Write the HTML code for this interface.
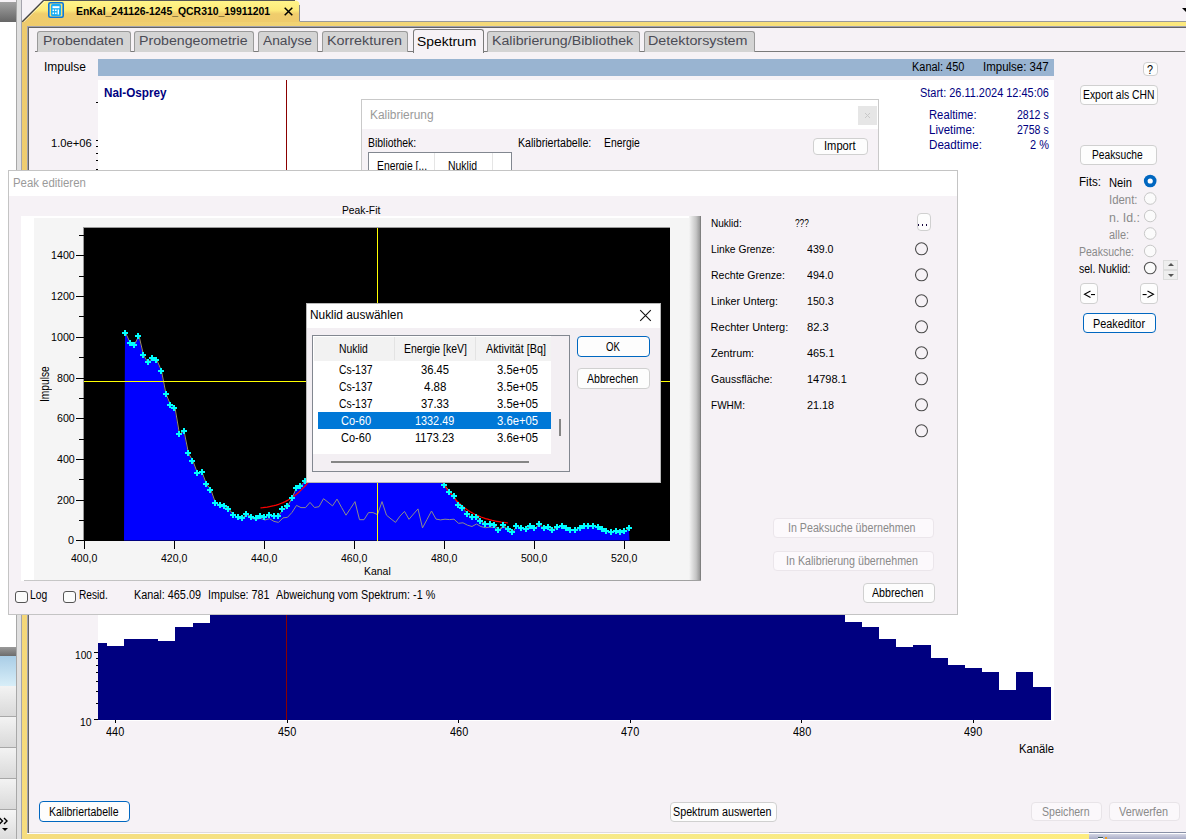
<!DOCTYPE html><html><head><meta charset="utf-8"><style>
html,body{margin:0;padding:0;}
body{width:1186px;height:839px;overflow:hidden;position:relative;background:#f6f2f6;font-family:"Liberation Sans",sans-serif;}
div{box-sizing:border-box;}
.t{position:absolute;white-space:nowrap;line-height:normal;}
.btn{position:absolute;background:#fdfdfd;border:1px solid #d0d0d0;border-radius:4px;}
</style></head><body>
<div style="position:absolute;left:0px;top:2px;width:17px;height:20px;background:linear-gradient(#a2a2a2,#666)"></div>
<div style="position:absolute;left:0px;top:22px;width:17px;height:626px;background:#fff"></div>
<div style="position:absolute;left:16px;top:0px;width:6px;height:839px;background:#e0e0e0;border-left:1px solid #a8a8a8"></div>
<div style="position:absolute;left:21px;top:0px;width:1px;height:839px;background:#a4a4ac"></div>
<div style="position:absolute;left:0px;top:647px;width:16px;height:9px;background:linear-gradient(#9a9a9a,#6d6d6d)"></div>
<div style="position:absolute;left:0px;top:656px;width:16px;height:30px;background:linear-gradient(#a9cde6,#d8eef8)"></div>
<div style="position:absolute;left:0px;top:686px;width:16px;height:31px;background:linear-gradient(#f3f3f3,#d9d9d9);border-bottom:1px solid #a8a8a8"></div>
<div style="position:absolute;left:0px;top:717px;width:16px;height:31px;background:linear-gradient(#f3f3f3,#d9d9d9);border-bottom:1px solid #a8a8a8"></div>
<div style="position:absolute;left:0px;top:748px;width:16px;height:31px;background:linear-gradient(#f3f3f3,#d9d9d9);border-bottom:1px solid #a8a8a8"></div>
<div style="position:absolute;left:0px;top:779px;width:16px;height:31px;background:linear-gradient(#f3f3f3,#d9d9d9);border-bottom:1px solid #a8a8a8"></div>
<div style="position:absolute;left:0px;top:810px;width:16px;height:29px;background:linear-gradient(#f6f6f6,#dcdcdc)"></div>
<svg style="position:absolute;left:0;top:817px" width="10" height="8"><path d="M-0.5,1L2.5,4L-0.5,7M4,1L7,4L4,7" stroke="#000" stroke-width="1.4" fill="none"/></svg>
<div style="position:absolute;left:1.5px;top:827.5px;width:0;height:0;border-left:3px solid transparent;border-right:3px solid transparent;border-top:3.5px solid #000"></div>
<div style="position:absolute;left:22px;top:21px;width:1164px;height:818px;background:linear-gradient(90deg,#efcb6c 0%,#f4d979 40%,#fce97e 100%)"></div>
<div style="position:absolute;left:44px;top:21px;width:1142px;height:1px;background:#9a9a9a"></div>
<div style="position:absolute;left:27px;top:26px;width:1159px;height:1px;background:#a2a2ae"></div>
<div style="position:absolute;left:27px;top:26px;width:1px;height:807px;background:#a2a2ae"></div>
<div style="position:absolute;left:28px;top:27px;width:1158px;height:1px;background:#646464"></div>
<div style="position:absolute;left:28px;top:27px;width:1px;height:806px;background:#646464"></div>
<div style="position:absolute;left:29px;top:28px;width:1157px;height:805px;background:#f6f2f6"></div>
<div style="position:absolute;left:22px;top:21px;width:5px;height:813px;background:linear-gradient(#edca6d,#f2d274 50%,#f7dd7e)"></div>
<div style="position:absolute;left:29px;top:832px;width:1157px;height:1px;background:#dedade"></div>
<div style="position:absolute;left:27px;top:833px;width:1159px;height:1px;background:#fdfdfd"></div>
<div style="position:absolute;left:22px;top:834px;width:1067px;height:5px;background:linear-gradient(90deg,#f5dc7e,#f5e98a 45%,#fdec80)"></div>
<div style="position:absolute;left:1089px;top:832px;width:97px;height:1px;background:#8890a6"></div>
<div style="position:absolute;left:1089px;top:833px;width:97px;height:1px;background:#fdfdff"></div>
<div style="position:absolute;left:1089px;top:834px;width:97px;height:5px;background:linear-gradient(#d4d6e4,#a8abc6)"></div>
<div style="position:absolute;left:1098px;top:837px;width:5px;height:2px;background:#fff;border-top:1px solid #3c5a5a"></div>
<div style="position:absolute;left:1105px;top:837px;width:2px;height:2px;background:#f0a020"></div>
<svg style="position:absolute;left:0;top:0" width="320" height="30">
<defs><linearGradient id="tg" x1="0" y1="0" x2="0" y2="1"><stop offset="0" stop-color="#fff58a"/><stop offset="0.45" stop-color="#fdea7a"/><stop offset="0.62" stop-color="#f0cd6c"/><stop offset="1" stop-color="#efcb6c"/></linearGradient></defs>
<path d="M22,22 L43.5,0.5 L295,0.5 Q299.5,0.5 299.5,5 L299.5,22 Z" fill="url(#tg)"/>
<path d="M23.6,22 L45,0.6" stroke="#fff" stroke-width="0.9" fill="none" opacity="0.8"/><path d="M22.3,21.8 L44,0" stroke="#444" stroke-width="1.3" fill="none"/>
<path d="M43,0.5 L295,0.5" stroke="#555" stroke-width="1" fill="none"/>
<path d="M299.5,5 L299.5,21" stroke="#888" stroke-width="1" fill="none"/>
</svg>
<svg style="position:absolute;left:48px;top:2px" width="16" height="16">
<rect x="0.8" y="0.8" width="14.4" height="14.4" rx="1.5" fill="#f3e27a" stroke="#0a77dc" stroke-width="1.6"/>
<rect x="3" y="3.6" width="10" height="12" rx="1.6" fill="#17aef5" transform="translate(0,-1.6)"/>
<rect x="4.5" y="4.2" width="7" height="2" fill="#fff"/>
<rect x="4.5" y="7.5" width="1.6" height="1.6" fill="#fff"/><rect x="7" y="7.5" width="1.6" height="1.6" fill="#fff"/>
<rect x="4.5" y="10.5" width="1.6" height="1.6" fill="#fff"/><rect x="7" y="10.5" width="1.6" height="1.6" fill="#fff"/>
<rect x="9.6" y="7.5" width="1.4" height="5" fill="#fff"/>
</svg>
<div class="t" style="left:75.90px;top:5px;font-size:11px;color:#000;font-weight:bold;transform:scaleX(0.9474);transform-origin:0 0;">EnKal_241126-1245_QCR310_19911201</div>
<svg style="position:absolute;left:284px;top:7px" width="9" height="9"><path d="M0.7,0.7 L8.3,8.3 M8.3,0.7 L0.7,8.3" stroke="#000" stroke-width="1.5"/></svg>
<div style="position:absolute;left:1182px;top:8px;width:0;height:0;border-left:4px solid transparent;border-right:4px solid transparent;border-top:4px solid #000"></div>
<div style="position:absolute;left:35px;top:51px;width:1150px;height:1px;background:#7a7a7a"></div>
<div style="position:absolute;left:37px;top:31px;width:94px;height:21px;background:#d4d4d4;border:1px solid #9a9a9a;border-bottom:none;border-radius:3px 3px 0 0"></div>
<div class="t" style="left:42.70px;top:34px;font-size:12.5px;color:#4b4b55;transform:scaleX(1.1260);transform-origin:0 0;">Probendaten</div>
<div style="position:absolute;left:134px;top:31px;width:120px;height:21px;background:#d4d4d4;border:1px solid #9a9a9a;border-bottom:none;border-radius:3px 3px 0 0"></div>
<div class="t" style="left:138.90px;top:34px;font-size:12.5px;color:#4b4b55;transform:scaleX(1.1326);transform-origin:0 0;">Probengeometrie</div>
<div style="position:absolute;left:258px;top:31px;width:60px;height:21px;background:#d4d4d4;border:1px solid #9a9a9a;border-bottom:none;border-radius:3px 3px 0 0"></div>
<div class="t" style="left:262.70px;top:34px;font-size:12.5px;color:#4b4b55;transform:scaleX(1.0996);transform-origin:0 0;">Analyse</div>
<div style="position:absolute;left:322px;top:31px;width:86px;height:21px;background:#d4d4d4;border:1px solid #9a9a9a;border-bottom:none;border-radius:3px 3px 0 0"></div>
<div class="t" style="left:326.80px;top:34px;font-size:12.5px;color:#4b4b55;transform:scaleX(1.1470);transform-origin:0 0;">Korrekturen</div>
<div style="position:absolute;left:412.5px;top:29px;width:71.0px;height:24px;background:#f6f2f6;border:1px solid #7a7a7a;border-bottom:none;border-radius:3px 3px 0 0"></div>
<div class="t" style="left:417.30px;top:35px;font-size:12.5px;color:#000;transform:scaleX(1.1105);transform-origin:0 0;">Spektrum</div>
<div style="position:absolute;left:487px;top:31px;width:153px;height:21px;background:#d4d4d4;border:1px solid #9a9a9a;border-bottom:none;border-radius:3px 3px 0 0"></div>
<div class="t" style="left:491.80px;top:34px;font-size:12.5px;color:#4b4b55;transform:scaleX(1.1353);transform-origin:0 0;">Kalibrierung/Bibliothek</div>
<div style="position:absolute;left:643.5px;top:31px;width:111.0px;height:21px;background:#d4d4d4;border:1px solid #9a9a9a;border-bottom:none;border-radius:3px 3px 0 0"></div>
<div class="t" style="left:648.20px;top:34px;font-size:12.5px;color:#4b4b55;transform:scaleX(1.1460);transform-origin:0 0;">Detektorsystem</div>
<div class="t" style="left:44.40px;top:60px;font-size:12px;color:#000;transform:scaleX(0.9949);transform-origin:0 0;">Impulse</div>
<div style="position:absolute;left:98px;top:59px;width:956px;height:17px;background:#99b4d1"></div>
<div class="t" style="left:983.40px;top:60px;font-size:12px;color:#000;transform:scaleX(0.9563);transform-origin:0 0;">Impulse: 347</div>
<div class="t" style="left:912.40px;top:60px;font-size:12px;color:#000;transform:scaleX(0.9133);transform-origin:0 0;">Kanal: 450</div>
<div style="position:absolute;left:98px;top:80px;width:956px;height:641px;background:#fff"></div>
<svg style="position:absolute;left:0;top:0" width="1186" height="839"><path d="M98.00,643H106.82V720H98.00ZM106.82,646H123.98V720H106.82ZM123.98,639H141.14V720H123.98ZM141.14,639H158.30V720H141.14ZM158.30,641H175.46V720H158.30ZM175.46,627H192.62V720H175.46ZM192.62,623H209.78V720H192.62ZM209.78,400H226.94V720H209.78ZM226.94,400H244.10V720H226.94ZM244.10,400H261.26V720H244.10ZM261.26,400H278.42V720H261.26ZM278.42,400H295.58V720H278.42ZM295.58,400H312.74V720H295.58ZM312.74,400H329.90V720H312.74ZM329.90,400H347.06V720H329.90ZM347.06,400H364.22V720H347.06ZM364.22,400H381.38V720H364.22ZM381.38,400H398.54V720H381.38ZM398.54,400H415.70V720H398.54ZM415.70,400H432.86V720H415.70ZM432.86,400H450.02V720H432.86ZM450.02,400H467.18V720H450.02ZM467.18,400H484.34V720H467.18ZM484.34,400H501.50V720H484.34ZM501.50,400H518.66V720H501.50ZM518.66,400H535.82V720H518.66ZM535.82,400H552.98V720H535.82ZM552.98,400H570.14V720H552.98ZM570.14,400H587.30V720H570.14ZM587.30,400H604.46V720H587.30ZM604.46,400H621.62V720H604.46ZM621.62,400H638.78V720H621.62ZM638.78,400H655.94V720H638.78ZM655.94,400H673.10V720H655.94ZM673.10,400H690.26V720H673.10ZM690.26,400H707.42V720H690.26ZM707.42,400H724.58V720H707.42ZM724.58,400H741.74V720H724.58ZM741.74,400H758.90V720H741.74ZM758.90,400H776.06V720H758.90ZM776.06,400H793.22V720H776.06ZM793.22,400H810.38V720H793.22ZM810.38,400H827.54V720H810.38ZM827.54,400H844.70V720H827.54ZM844.70,622H861.86V720H844.70ZM861.86,627H879.02V720H861.86ZM879.02,639H896.18V720H879.02ZM896.18,647H913.34V720H896.18ZM913.34,645H930.50V720H913.34ZM930.50,658H947.66V720H930.50ZM947.66,665H964.82V720H947.66ZM964.82,668H981.98V720H964.82ZM981.98,672H999.14V720H981.98ZM999.14,690H1016.30V720H999.14ZM1016.30,672H1033.46V720H1016.30ZM1033.46,687H1050.62V720H1033.46Z" fill="#000080" shape-rendering="crispEdges"/><rect x="286" y="80" width="1" height="640" fill="#8b0000"/><path d="M96,102.5H98M96,140.5H98M96,146.5H98M96,153.5H98M96,160.5H98M96,169.5H98M94,652.5H98M94,719.5H98M96,658.5H98M96,665.5H98M96,672.5H98M96,681.5H98M96,691.5H98M96,703.5H98M115.4,720V723M287.0,720V723M458.6,720V723M630.2,720V723M801.8,720V723M973.4,720V723" stroke="#000" stroke-width="1" fill="none" shape-rendering="crispEdges"/></svg>
<div class="t" style="left:103.70px;top:86px;font-size:12px;color:#000080;font-weight:bold;transform:scaleX(0.9762);transform-origin:0 0;">NaI-Osprey</div>
<div class="t" style="left:51.30px;top:137px;font-size:11px;color:#000;transform:scaleX(1.0183);transform-origin:0 0;">1.0e+06</div>
<div class="t" style="left:74.70px;top:649px;font-size:11px;color:#000;transform:scaleX(0.9264);transform-origin:0 0;">100</div>
<div class="t" style="left:80.20px;top:716px;font-size:11px;color:#000;transform:scaleX(0.9400);transform-origin:0 0;">10</div>
<div class="t" style="left:106.30px;top:725px;font-size:12px;color:#000;transform:scaleX(0.9091);transform-origin:0 0;">440</div>
<div class="t" style="left:277.90px;top:725px;font-size:12px;color:#000;transform:scaleX(0.9091);transform-origin:0 0;">450</div>
<div class="t" style="left:449.50px;top:725px;font-size:12px;color:#000;transform:scaleX(0.9091);transform-origin:0 0;">460</div>
<div class="t" style="left:621.10px;top:725px;font-size:12px;color:#000;transform:scaleX(0.9091);transform-origin:0 0;">470</div>
<div class="t" style="left:792.70px;top:725px;font-size:12px;color:#000;transform:scaleX(0.9091);transform-origin:0 0;">480</div>
<div class="t" style="left:964.30px;top:725px;font-size:12px;color:#000;transform:scaleX(0.9091);transform-origin:0 0;">490</div>
<div class="t" style="left:1019.00px;top:742px;font-size:12px;color:#000;transform:scaleX(0.9368);transform-origin:0 0;">Kanäle</div>
<div class="t" style="left:920.20px;top:86px;font-size:12px;color:#000080;transform:scaleX(0.9128);transform-origin:0 0;">Start: 26.11.2024 12:45:06</div>
<div class="t" style="left:928.70px;top:108px;font-size:12px;color:#000080;transform:scaleX(0.9372);transform-origin:0 0;">Realtime:</div>
<div class="t" style="left:1017.40px;top:108px;font-size:12px;color:#000080;transform:scaleX(0.8799);transform-origin:0 0;">2812 s</div>
<div class="t" style="left:928.70px;top:123px;font-size:12px;color:#000080;transform:scaleX(0.9580);transform-origin:0 0;">Livetime:</div>
<div class="t" style="left:1017.40px;top:123px;font-size:12px;color:#000080;transform:scaleX(0.8799);transform-origin:0 0;">2758 s</div>
<div class="t" style="left:928.70px;top:138px;font-size:12px;color:#000080;transform:scaleX(0.9673);transform-origin:0 0;">Deadtime:</div>
<div class="t" style="left:1030.20px;top:138px;font-size:12px;color:#000080;transform:scaleX(0.9140);transform-origin:0 0;">2 %</div>
<div style="position:absolute;left:1143px;top:62px;width:15px;height:14px;background:#fdfdfd;border:1px solid #d0d0d0;border-radius:4px"></div>
<div class="t" style="left:1146.50px;top:63px;font-size:12px;color:#000;transform:scaleX(0.8991);transform-origin:0 0;">?</div>
<div style="position:absolute;left:1080px;top:85px;width:78px;height:20px;background:#fdfdfd;border:1px solid #d0d0d0;border-radius:4px"></div>
<div class="t" style="left:1082.60px;top:88px;font-size:12px;color:#000;transform:scaleX(0.8647);transform-origin:0 0;">Export als CHN</div>
<div style="position:absolute;left:1079.5px;top:145px;width:77.5px;height:20px;background:#fdfdfd;border:1px solid #d0d0d0;border-radius:4px"></div>
<div class="t" style="left:1091.50px;top:148px;font-size:12px;color:#000;transform:scaleX(0.8540);transform-origin:0 0;">Peaksuche</div>
<div class="t" style="left:1078.70px;top:175px;font-size:12px;color:#000;transform:scaleX(0.9707);transform-origin:0 0;">Fits:</div>
<div class="t" style="left:1108.50px;top:176px;font-size:12px;color:#000;transform:scaleX(0.9320);transform-origin:0 0;">Nein</div>
<div class="t" style="left:1108.50px;top:193px;font-size:12px;color:#8a8a8a;transform:scaleX(0.9493);transform-origin:0 0;">Ident:</div>
<div class="t" style="left:1108.50px;top:211px;font-size:12px;color:#8a8a8a;transform:scaleX(1.0328);transform-origin:0 0;">n. Id.:</div>
<div class="t" style="left:1108.50px;top:228px;font-size:12px;color:#8a8a8a;transform:scaleX(0.9086);transform-origin:0 0;">alle:</div>
<div class="t" style="left:1078.70px;top:245px;font-size:12px;color:#8a8a8a;transform:scaleX(0.8771);transform-origin:0 0;">Peaksuche:</div>
<div class="t" style="left:1078.70px;top:262px;font-size:12px;color:#000;transform:scaleX(0.8776);transform-origin:0 0;">sel. Nuklid:</div>
<svg style="position:absolute;left:1140px;top:170px" width="22" height="110"><circle cx="10.2" cy="11" r="6.3" fill="#0067c0"/><circle cx="10.2" cy="11" r="2.6" fill="#fff"/><circle cx="10.2" cy="28.5" r="5.8" fill="#fbfbfb" stroke="#c8c8c8" stroke-width="1"/><circle cx="10.2" cy="46" r="5.8" fill="#fbfbfb" stroke="#c8c8c8" stroke-width="1"/><circle cx="10.2" cy="63.5" r="5.8" fill="#fbfbfb" stroke="#c8c8c8" stroke-width="1"/><circle cx="10.2" cy="81" r="5.8" fill="#fbfbfb" stroke="#c8c8c8" stroke-width="1"/><circle cx="10.2" cy="98" r="5.8" fill="#fbfbfb" stroke="#555" stroke-width="1.1"/></svg>
<div style="position:absolute;left:1163px;top:260px;width:15px;height:10px;background:#eeeeee;border:1px solid #dcdcdc"></div>
<div style="position:absolute;left:1163px;top:270px;width:15px;height:10px;background:#eeeeee;border:1px solid #dcdcdc"></div>
<div style="position:absolute;left:1168px;top:263px;width:0;height:0;border-left:3px solid transparent;border-right:3px solid transparent;border-bottom:3px solid #555"></div>
<div style="position:absolute;left:1168px;top:274px;width:0;height:0;border-left:3px solid transparent;border-right:3px solid transparent;border-top:3px solid #555"></div>
<div style="position:absolute;left:1080px;top:283px;width:17.5px;height:21px;background:#fdfdfd;border:1px solid #d0d0d0;border-radius:4px"></div>
<div style="position:absolute;left:1140px;top:283px;width:18px;height:21px;background:#fdfdfd;border:1px solid #d0d0d0;border-radius:4px"></div>
<svg style="position:absolute;left:1080px;top:283px" width="80" height="21"><path d="M10.5,8L4.5,11.3L10.5,14.6" stroke="#000" stroke-width="1.1" fill="none"/><rect x="11" y="11" width="4" height="1.1" fill="#000"/><rect x="62.6" y="11" width="4" height="1.1" fill="#000"/><path d="M67.5,8L73.5,11.3L67.5,14.6" stroke="#000" stroke-width="1.1" fill="none"/></svg>
<div style="position:absolute;left:1083px;top:312.5px;width:73px;height:20.5px;background:#fdfdfd;border:1px solid #0067c0;border-radius:4px"></div>
<div class="t" style="left:1093.00px;top:317px;font-size:12px;color:#000;transform:scaleX(0.9065);transform-origin:0 0;">Peakeditor</div>
<div style="position:absolute;left:39px;top:801px;width:91px;height:21px;background:#fdfdfd;border:1px solid #0067c0;border-radius:4px"></div>
<div class="t" style="left:48.50px;top:805px;font-size:12px;color:#000;transform:scaleX(0.8756);transform-origin:0 0;">Kalibriertabelle</div>
<div style="position:absolute;left:669.5px;top:801.5px;width:107.5px;height:20.0px;background:#fdfdfd;border:1px solid #d0d0d0;border-radius:4px"></div>
<div class="t" style="left:672.50px;top:805px;font-size:12px;color:#000;transform:scaleX(0.8951);transform-origin:0 0;">Spektrum auswerten</div>
<div style="position:absolute;left:1030.5px;top:801.5px;width:71.5px;height:19.5px;background:#fbf8fb;border:1px solid #e8e4e8;border-radius:4px"></div>
<div class="t" style="left:1042.00px;top:805px;font-size:12px;color:#8a8a8a;transform:scaleX(0.8791);transform-origin:0 0;">Speichern</div>
<div style="position:absolute;left:1108.5px;top:801.5px;width:71.5px;height:19.5px;background:#fbf8fb;border:1px solid #e8e4e8;border-radius:4px"></div>
<div class="t" style="left:1119.00px;top:805px;font-size:12px;color:#8a8a8a;transform:scaleX(0.9070);transform-origin:0 0;">Verwerfen</div>
<div style="position:absolute;left:361px;top:98.5px;width:518px;height:80px;background:#f6f2f6;border:1px solid #c9c9c9;border-bottom:none"></div>
<div style="position:absolute;left:362px;top:99.5px;width:516px;height:29.5px;background:#fff"></div>
<div class="t" style="left:370.20px;top:108px;font-size:12px;color:#9a9a9a;transform:scaleX(0.9917);transform-origin:0 0;">Kalibrierung</div>
<div style="position:absolute;left:858px;top:106px;width:19px;height:19px;background:#e6e6e6"></div>
<svg style="position:absolute;left:864px;top:112px" width="7" height="7"><path d="M1,1L6,6M6,1L1,6" stroke="#c8c8c8" stroke-width="1"/></svg>
<div class="t" style="left:367.70px;top:136px;font-size:12px;color:#000;transform:scaleX(0.8688);transform-origin:0 0;">Bibliothek:</div>
<div class="t" style="left:517.50px;top:136px;font-size:12px;color:#000;transform:scaleX(0.8863);transform-origin:0 0;">Kalibriertabelle:</div>
<div class="t" style="left:604.40px;top:136px;font-size:12px;color:#000;transform:scaleX(0.8632);transform-origin:0 0;">Energie</div>
<div style="position:absolute;left:813px;top:137.5px;width:55px;height:17.5px;background:#fdfdfd;border:1px solid #d0d0d0;border-radius:4px"></div>
<div class="t" style="left:824.00px;top:139px;font-size:12px;color:#000;transform:scaleX(0.9293);transform-origin:0 0;">Import</div>
<div style="position:absolute;left:368px;top:151.5px;width:144px;height:30px;background:#fff;border:1px solid #828790"></div>
<div style="position:absolute;left:369px;top:152.5px;width:65px;height:20px;background:#fff"></div>
<div style="position:absolute;left:434px;top:153px;width:1px;height:18px;background:#e5e5e5"></div>
<div style="position:absolute;left:491.5px;top:153px;width:1px;height:18px;background:#e5e5e5"></div>
<div class="t" style="left:377.30px;top:159px;font-size:12px;color:#000;transform:scaleX(0.8617);transform-origin:0 0;">Energie [...</div>
<div class="t" style="left:448.40px;top:159px;font-size:12px;color:#000;transform:scaleX(0.8697);transform-origin:0 0;">Nuklid</div>
<div style="position:absolute;left:8px;top:170px;width:950px;height:445px;background:#f6f2f6;border:1px solid #c4c4c4"></div>
<div style="position:absolute;left:9px;top:171px;width:948px;height:25px;background:#fff"></div>
<div class="t" style="left:12.50px;top:176px;font-size:12px;color:#9a9a9a;transform:scaleX(0.9490);transform-origin:0 0;">Peak editieren</div>
<div class="t" style="left:341.70px;top:204px;font-size:11px;color:#000;transform:scaleX(0.9352);transform-origin:0 0;-webkit-font-smoothing:none;">Peak-Fit</div>
<div style="position:absolute;left:21px;top:216px;width:680px;height:365px;background:#fff"></div>
<div style="position:absolute;left:34px;top:218px;width:667px;height:362px;background:#f5f5f5"></div>
<div style="position:absolute;left:689px;top:216px;width:12px;height:365px;background:linear-gradient(90deg,#f5f5f5,#c4c4c4 60%,#999 90%,#6e6e6e)"></div>
<div style="position:absolute;left:24px;top:580px;width:677px;height:1px;background:linear-gradient(90deg,#c8c8c8,#a0a0a0)"></div>
<svg style="position:absolute;left:0;top:0" width="1186" height="839" shape-rendering="crispEdges"><rect x="83" y="227" width="587" height="314" fill="#9a9a9a"/><rect x="84" y="228" width="586" height="313" fill="#000"/><polygon points="124,540.5 125.0,332.5 129.5,342.5 134.0,344.5 138.5,335.8 143.0,355.1 147.5,362.5 152.0,358.0 156.5,360.2 161.0,371.0 165.5,394.0 170.0,404.6 174.5,407.7 179.0,434.2 183.5,430.9 188.0,453.3 192.5,461.1 197.0,473.3 201.5,472.1 206.0,484.1 210.5,490.0 215.0,503.0 219.5,504.9 224.0,506.3 228.5,509.1 233.0,515.0 237.5,517.3 242.0,517.9 246.5,513.6 251.0,517.3 255.5,517.9 260.0,516.5 264.5,517.3 269.0,515.0 273.5,516.5 278.0,515.9 282.5,509.3 287.0,506.3 291.5,498.3 296.0,487.7 300.5,485.7 305.0,480.6 309.5,469.7 314.0,468.4 318.5,460.4 323.0,444.6 327.5,439.8 332.0,434.7 336.5,419.0 341.0,418.2 345.5,417.3 350.0,402.3 354.5,387.7 359.0,399.2 363.5,393.7 368.0,382.5 372.5,379.9 377.0,380.9 381.5,368.6 386.0,384.5 390.5,392.0 395.0,400.7 399.5,400.8 404.0,403.6 408.5,419.7 413.0,423.1 417.5,427.0 422.0,454.9 426.5,455.4 431.0,455.2 435.5,471.3 440.0,479.4 444.5,485.3 449.0,491.6 453.5,496.3 458.0,504.9 462.5,508.1 467.0,513.6 471.5,517.5 476.0,517.1 480.5,521.4 485.0,523.8 489.5,524.2 494.0,525.4 498.5,529.7 503.0,525.4 507.5,529.3 512.0,532.4 516.5,526.0 521.0,528.1 525.5,528.9 530.0,526.0 534.5,528.1 539.0,524.2 543.5,528.3 548.0,527.3 552.5,529.5 557.0,527.3 561.5,526.2 566.0,528.3 570.5,529.5 575.0,529.5 579.5,528.3 584.0,526.2 588.5,526.2 593.0,526.2 597.5,527.3 602.0,529.1 606.5,531.1 611.0,532.1 615.5,531.1 620.0,531.5 624.5,531.1 629.0,528.3 629.5,540.5" fill="#0000ff" shape-rendering="auto"/></svg>
<svg style="position:absolute;left:0;top:0" width="1186" height="839"><polyline points="238.0,517.6 242.5,518.4 247.0,514.3 251.5,518.3 256.0,519.3 260.5,518.4 265.0,520.0 269.5,518.7 274.0,521.4 278.5,522.4 283.0,517.9 287.5,517.3 292.0,512.4 296.5,505.4 301.0,507.6 305.5,507.6 310.0,502.4 314.5,507.5 319.0,506.7 323.5,498.7 328.0,502.2 332.5,505.9 337.0,499.1 341.5,507.3 346.0,515.2 350.5,508.5 355.0,501.6 359.5,519.7 364.0,519.7 368.5,512.6 373.0,512.6 377.5,514.6 382.0,501.6 386.5,515.2 391.0,518.9 395.5,522.4 400.0,516.1 404.5,511.4 409.0,519.3 413.5,514.0 418.0,508.9 422.5,527.9 427.0,519.5 431.5,511.0 436.0,519.1 440.5,519.9 445.0,519.2 449.5,519.6 454.0,519.2 458.5,523.3 463.0,522.8 467.5,525.2 472.0,526.5 476.5,524.0 481.0,526.6 485.5,527.7 490.0,527.1 494.5,527.5 499.0,531.2 503.5,526.5 508.0,530.1 512.5,532.9" fill="none" stroke="#8c8c8c" stroke-width="1"/><polyline points="125.5,332.5 130.0,342.5 134.5,344.5 139.0,335.8 143.5,355.1 148.0,362.5 152.5,358.0 157.0,360.2 161.5,371.0 166.0,394.0 170.5,404.6 175.0,407.7 179.5,434.2 184.0,430.9 188.5,453.3 193.0,461.1 197.5,473.3 202.0,472.1 206.5,484.1 211.0,490.0 215.5,503.0 220.0,504.9 224.5,506.3 229.0,509.1 233.5,515.0 238.0,517.3 242.5,517.9 247.0,513.6 251.5,517.3 256.0,517.9 260.5,516.5 265.0,517.3 269.5,515.0 274.0,516.5 278.5,515.9 283.0,509.3 287.5,506.3 292.0,498.3 296.5,487.7 301.0,485.7 305.5,480.6 310.0,469.7 314.5,468.4 319.0,460.4 323.5,444.6 328.0,439.8 332.5,434.7 337.0,419.0 341.5,418.2 346.0,417.3 350.5,402.3 355.0,387.7 359.5,399.2 364.0,393.7 368.5,382.5 373.0,379.9 377.5,380.9 382.0,368.6 386.5,384.5 391.0,392.0 395.5,400.7 400.0,400.8 404.5,403.6 409.0,419.7 413.5,423.1 418.0,427.0 422.5,454.9 427.0,455.4 431.5,455.2 436.0,471.3 440.5,479.4 445.0,485.3 449.5,491.6 454.0,496.3 458.5,504.9 463.0,508.1 467.5,513.6 472.0,517.5 476.5,517.1 481.0,521.4 485.5,523.8 490.0,524.2 494.5,525.4 499.0,529.7 503.5,525.4 508.0,529.3 512.5,532.4 517.0,526.0 521.5,528.1 526.0,528.9 530.5,526.0 535.0,528.1 539.5,524.2 544.0,528.3 548.5,527.3 553.0,529.5 557.5,527.3 562.0,526.2 566.5,528.3 571.0,529.5 575.5,529.5 580.0,528.3 584.5,526.2 589.0,526.2 593.5,526.2 598.0,527.3 602.5,529.1 607.0,531.1 611.5,532.1 616.0,531.1 620.5,531.5 625.0,531.1 629.5,528.3" fill="none" stroke="#9a8a70" stroke-width="1"/><polyline points="260.5,507.9 262.8,507.7 265.0,507.4 267.2,507.1 269.5,506.7 271.8,506.2 274.0,505.7 276.2,505.1 278.5,504.4 280.8,503.5 283.0,502.6 285.2,501.6 287.5,500.4 289.8,499.1 292.0,497.6 294.2,496.0 296.5,494.2 298.8,492.3 301.0,490.2 303.2,487.9 305.5,485.5 307.8,482.8 310.0,480.0 312.2,477.0 314.5,473.8 316.8,470.4 319.0,466.9 321.2,463.2 323.5,459.3 325.8,455.3 328.0,451.2 330.2,447.0 332.5,442.7 334.8,438.4 337.0,434.0 339.2,429.6 341.5,425.3 343.8,421.0 346.0,416.8 348.2,412.7 350.5,408.7 352.8,404.9 355.0,401.3 357.2,398.0 359.5,394.9 361.8,392.1 364.0,389.7 366.2,387.6 368.5,385.8 370.8,384.5 373.0,383.5 375.2,382.9 377.5,382.7 379.8,383.0 382.0,383.7 384.2,384.7 386.5,386.2 388.8,388.0 391.0,390.3 393.2,392.8 395.5,395.7 397.8,398.9 400.0,402.4 402.2,406.2 404.5,410.1 406.8,414.3 409.0,418.6 411.2,423.0 413.5,427.5 415.8,432.1 418.0,436.8 420.2,441.4 422.5,446.0 424.8,450.6 427.0,455.0 429.2,459.4 431.5,463.7 433.8,467.9 436.0,471.9 438.2,475.8 440.5,479.5 442.8,483.0 445.0,486.3 447.2,489.5 449.5,492.4 451.8,495.2 454.0,497.8 456.2,500.3 458.5,502.5 460.8,504.6 463.0,506.5 465.2,508.3 467.5,509.9 469.8,511.4 472.0,512.7 474.2,514.0 476.5,515.1 478.8,516.1 481.0,517.0 483.2,517.8 485.5,518.6 487.8,519.2 490.0,519.8 492.2,520.4 494.5,520.9 496.8,521.3 499.0,521.7 501.2,522.1 503.5,522.4 505.8,522.7 508.0,523.0" fill="none" stroke="#ff0000" stroke-width="1.2"/><rect x="377" y="228" width="1" height="313" fill="#ffff00"/><rect x="84" y="381" width="586" height="1" fill="#ffff00"/><path d="M122,332h6v2h-6zM124,330h2v6h-2zM127,342h6v2h-6zM129,340h2v6h-2zM131,344h6v2h-6zM133,342h2v6h-2zM135,335h6v2h-6zM137,333h2v6h-2zM140,354h6v2h-6zM142,352h2v6h-2zM145,361h6v2h-6zM147,359h2v6h-2zM149,357h6v2h-6zM151,355h2v6h-2zM153,359h6v2h-6zM155,357h2v6h-2zM158,370h6v2h-6zM160,368h2v6h-2zM163,393h6v2h-6zM165,391h2v6h-2zM167,404h6v2h-6zM169,402h2v6h-2zM171,407h6v2h-6zM173,405h2v6h-2zM176,433h6v2h-6zM178,431h2v6h-2zM181,430h6v2h-6zM183,428h2v6h-2zM185,452h6v2h-6zM187,450h2v6h-2zM189,460h6v2h-6zM191,458h2v6h-2zM194,472h6v2h-6zM196,470h2v6h-2zM199,471h6v2h-6zM201,469h2v6h-2zM203,483h6v2h-6zM205,481h2v6h-2zM207,489h6v2h-6zM209,487h2v6h-2zM212,502h6v2h-6zM214,500h2v6h-2zM217,504h6v2h-6zM219,502h2v6h-2zM221,505h6v2h-6zM223,503h2v6h-2zM225,508h6v2h-6zM227,506h2v6h-2zM230,514h6v2h-6zM232,512h2v6h-2zM235,516h6v2h-6zM237,514h2v6h-2zM239,517h6v2h-6zM241,515h2v6h-2zM243,513h6v2h-6zM245,511h2v6h-2zM248,516h6v2h-6zM250,514h2v6h-2zM253,517h6v2h-6zM255,515h2v6h-2zM257,515h6v2h-6zM259,513h2v6h-2zM261,516h6v2h-6zM263,514h2v6h-2zM266,514h6v2h-6zM268,512h2v6h-2zM271,515h6v2h-6zM273,513h2v6h-2zM275,515h6v2h-6zM277,513h2v6h-2zM279,508h6v2h-6zM281,506h2v6h-2zM284,505h6v2h-6zM286,503h2v6h-2zM289,497h6v2h-6zM291,495h2v6h-2zM293,487h6v2h-6zM295,485h2v6h-2zM297,485h6v2h-6zM299,483h2v6h-2zM302,480h6v2h-6zM304,478h2v6h-2zM307,469h6v2h-6zM309,467h2v6h-2zM311,467h6v2h-6zM313,465h2v6h-2zM315,459h6v2h-6zM317,457h2v6h-2zM320,444h6v2h-6zM322,442h2v6h-2zM325,439h6v2h-6zM327,437h2v6h-2zM329,434h6v2h-6zM331,432h2v6h-2zM333,418h6v2h-6zM335,416h2v6h-2zM338,417h6v2h-6zM340,415h2v6h-2zM343,416h6v2h-6zM345,414h2v6h-2zM347,401h6v2h-6zM349,399h2v6h-2zM351,387h6v2h-6zM353,385h2v6h-2zM356,398h6v2h-6zM358,396h2v6h-2zM361,393h6v2h-6zM363,391h2v6h-2zM365,381h6v2h-6zM367,379h2v6h-2zM369,379h6v2h-6zM371,377h2v6h-2zM374,380h6v2h-6zM376,378h2v6h-2zM379,368h6v2h-6zM381,366h2v6h-2zM383,383h6v2h-6zM385,381h2v6h-2zM387,391h6v2h-6zM389,389h2v6h-2zM392,400h6v2h-6zM394,398h2v6h-2zM397,400h6v2h-6zM399,398h2v6h-2zM401,403h6v2h-6zM403,401h2v6h-2zM405,419h6v2h-6zM407,417h2v6h-2zM410,422h6v2h-6zM412,420h2v6h-2zM415,426h6v2h-6zM417,424h2v6h-2zM419,454h6v2h-6zM421,452h2v6h-2zM423,454h6v2h-6zM425,452h2v6h-2zM428,454h6v2h-6zM430,452h2v6h-2zM433,470h6v2h-6zM435,468h2v6h-2zM437,478h6v2h-6zM439,476h2v6h-2zM441,484h6v2h-6zM443,482h2v6h-2zM446,491h6v2h-6zM448,489h2v6h-2zM451,495h6v2h-6zM453,493h2v6h-2zM455,504h6v2h-6zM457,502h2v6h-2zM459,507h6v2h-6zM461,505h2v6h-2zM464,513h6v2h-6zM466,511h2v6h-2zM469,516h6v2h-6zM471,514h2v6h-2zM473,516h6v2h-6zM475,514h2v6h-2zM477,520h6v2h-6zM479,518h2v6h-2zM482,523h6v2h-6zM484,521h2v6h-2zM487,523h6v2h-6zM489,521h2v6h-2zM491,524h6v2h-6zM493,522h2v6h-2zM495,529h6v2h-6zM497,527h2v6h-2zM500,524h6v2h-6zM502,522h2v6h-2zM505,528h6v2h-6zM507,526h2v6h-2zM509,531h6v2h-6zM511,529h2v6h-2zM513,525h6v2h-6zM515,523h2v6h-2zM518,527h6v2h-6zM520,525h2v6h-2zM523,528h6v2h-6zM525,526h2v6h-2zM527,525h6v2h-6zM529,523h2v6h-2zM531,527h6v2h-6zM533,525h2v6h-2zM536,523h6v2h-6zM538,521h2v6h-2zM541,527h6v2h-6zM543,525h2v6h-2zM545,526h6v2h-6zM547,524h2v6h-2zM549,529h6v2h-6zM551,527h2v6h-2zM554,526h6v2h-6zM556,524h2v6h-2zM559,525h6v2h-6zM561,523h2v6h-2zM563,527h6v2h-6zM565,525h2v6h-2zM567,529h6v2h-6zM569,527h2v6h-2zM572,529h6v2h-6zM574,527h2v6h-2zM577,527h6v2h-6zM579,525h2v6h-2zM581,525h6v2h-6zM583,523h2v6h-2zM585,525h6v2h-6zM587,523h2v6h-2zM590,525h6v2h-6zM592,523h2v6h-2zM595,526h6v2h-6zM597,524h2v6h-2zM599,528h6v2h-6zM601,526h2v6h-2zM603,530h6v2h-6zM605,528h2v6h-2zM608,531h6v2h-6zM610,529h2v6h-2zM613,530h6v2h-6zM615,528h2v6h-2zM617,531h6v2h-6zM619,529h2v6h-2zM621,530h6v2h-6zM623,528h2v6h-2zM626,527h6v2h-6zM628,525h2v6h-2z" fill="#00ffff" shape-rendering="crispEdges"/><path d="M76,540.5H84M79,520.5H84M76,500.5H84M79,479.5H84M76,459.5H84M79,439.5H84M76,418.5H84M79,398.5H84M76,378.5H84M79,357.5H84M76,337.5H84M79,316.5H84M76,296.5H84M79,276.5H84M76,255.5H84M79,235.5H84M84.5,541V549M174.5,541V549M264.5,541V549M354.5,541V549M444.5,541V549M534.5,541V549M624.5,541V549" stroke="#000" stroke-width="1" fill="none" shape-rendering="crispEdges"/></svg>
<div class="t" style="left:68.40px;top:534px;font-size:11px;color:#000;transform:scaleX(0.9809);transform-origin:0 0;-webkit-font-smoothing:none;">0</div>
<div class="t" style="left:56.60px;top:494px;font-size:11px;color:#000;transform:scaleX(0.9700);transform-origin:0 0;-webkit-font-smoothing:none;">200</div>
<div class="t" style="left:56.60px;top:453px;font-size:11px;color:#000;transform:scaleX(0.9700);transform-origin:0 0;-webkit-font-smoothing:none;">400</div>
<div class="t" style="left:56.60px;top:412px;font-size:11px;color:#000;transform:scaleX(0.9700);transform-origin:0 0;-webkit-font-smoothing:none;">600</div>
<div class="t" style="left:56.60px;top:372px;font-size:11px;color:#000;transform:scaleX(0.9700);transform-origin:0 0;-webkit-font-smoothing:none;">800</div>
<div class="t" style="left:50.60px;top:331px;font-size:11px;color:#000;transform:scaleX(0.9727);transform-origin:0 0;-webkit-font-smoothing:none;">1000</div>
<div class="t" style="left:50.60px;top:290px;font-size:11px;color:#000;transform:scaleX(0.9727);transform-origin:0 0;-webkit-font-smoothing:none;">1200</div>
<div class="t" style="left:50.60px;top:249px;font-size:11px;color:#000;transform:scaleX(0.9727);transform-origin:0 0;-webkit-font-smoothing:none;">1400</div>
<div class="t" style="left:71.35px;top:552px;font-size:11px;color:#000;transform:scaleX(0.9555);transform-origin:0 0;-webkit-font-smoothing:none;">400,0</div>
<div class="t" style="left:161.35px;top:552px;font-size:11px;color:#000;transform:scaleX(0.9555);transform-origin:0 0;-webkit-font-smoothing:none;">420,0</div>
<div class="t" style="left:251.35px;top:552px;font-size:11px;color:#000;transform:scaleX(0.9555);transform-origin:0 0;-webkit-font-smoothing:none;">440,0</div>
<div class="t" style="left:341.35px;top:552px;font-size:11px;color:#000;transform:scaleX(0.9555);transform-origin:0 0;-webkit-font-smoothing:none;">460,0</div>
<div class="t" style="left:431.35px;top:552px;font-size:11px;color:#000;transform:scaleX(0.9555);transform-origin:0 0;-webkit-font-smoothing:none;">480,0</div>
<div class="t" style="left:521.35px;top:552px;font-size:11px;color:#000;transform:scaleX(0.9555);transform-origin:0 0;-webkit-font-smoothing:none;">500,0</div>
<div class="t" style="left:611.35px;top:552px;font-size:11px;color:#000;transform:scaleX(0.9555);transform-origin:0 0;-webkit-font-smoothing:none;">520,0</div>
<div class="t" style="left:363.60px;top:565px;font-size:11px;color:#000;transform:scaleX(0.9491);transform-origin:0 0;-webkit-font-smoothing:none;">Kanal</div>
<div class="t" style="left:38px;top:402px;font-size:12px;color:#000;transform:rotate(-90deg);transform-origin:0 0;-webkit-font-smoothing:none;"><span style="display:inline-block;transform:scaleX(0.85);transform-origin:0 0">Impulse</span></div>
<div class="t" style="left:710.60px;top:217px;font-size:11px;color:#000;transform:scaleX(0.9131);transform-origin:0 0;">Nuklid:</div>
<div class="t" style="left:795.10px;top:217px;font-size:11px;color:#000;transform:scaleX(0.7520);transform-origin:0 0;">???</div>
<div class="t" style="left:710.60px;top:243px;font-size:11px;color:#000;transform:scaleX(0.9332);transform-origin:0 0;">Linke Grenze:</div>
<div class="t" style="left:807.40px;top:243px;font-size:11px;color:#000;transform:scaleX(0.9628);transform-origin:0 0;">439.0</div>
<div class="t" style="left:710.60px;top:269px;font-size:11px;color:#000;transform:scaleX(0.9593);transform-origin:0 0;">Rechte Grenze:</div>
<div class="t" style="left:807.40px;top:269px;font-size:11px;color:#000;transform:scaleX(0.9628);transform-origin:0 0;">494.0</div>
<div class="t" style="left:710.60px;top:295px;font-size:11px;color:#000;transform:scaleX(0.9698);transform-origin:0 0;">Linker Unterg:</div>
<div class="t" style="left:807.40px;top:295px;font-size:11px;color:#000;transform:scaleX(0.9664);transform-origin:0 0;">150.3</div>
<div class="t" style="left:710.60px;top:321px;font-size:11px;color:#000;">Rechter Unterg:</div>
<div class="t" style="left:806.70px;top:321px;font-size:11px;color:#000;transform:scaleX(1.0184);transform-origin:0 0;">82.3</div>
<div class="t" style="left:710.60px;top:347px;font-size:11px;color:#000;transform:scaleX(0.9794);transform-origin:0 0;">Zentrum:</div>
<div class="t" style="left:807.00px;top:347px;font-size:11px;color:#000;">465.1</div>
<div class="t" style="left:710.60px;top:373px;font-size:11px;color:#000;transform:scaleX(0.9564);transform-origin:0 0;">Gaussfläche:</div>
<div class="t" style="left:807.00px;top:373px;font-size:11px;color:#000;">14798.1</div>
<div class="t" style="left:710.60px;top:399px;font-size:11px;color:#000;transform:scaleX(0.9124);transform-origin:0 0;">FWHM:</div>
<div class="t" style="left:807.00px;top:399px;font-size:11px;color:#000;transform:scaleX(0.9810);transform-origin:0 0;">21.18</div>
<svg style="position:absolute;left:905px;top:235px" width="32" height="210"><circle cx="16.5" cy="13.8" r="6" fill="none" stroke="#4a4a4a" stroke-width="1.1"/><circle cx="16.5" cy="39.8" r="6" fill="none" stroke="#4a4a4a" stroke-width="1.1"/><circle cx="16.5" cy="65.8" r="6" fill="none" stroke="#4a4a4a" stroke-width="1.1"/><circle cx="16.5" cy="91.8" r="6" fill="none" stroke="#4a4a4a" stroke-width="1.1"/><circle cx="16.5" cy="117.8" r="6" fill="none" stroke="#4a4a4a" stroke-width="1.1"/><circle cx="16.5" cy="143.8" r="6" fill="none" stroke="#4a4a4a" stroke-width="1.1"/><circle cx="16.5" cy="169.8" r="6" fill="none" stroke="#4a4a4a" stroke-width="1.1"/><circle cx="16.5" cy="195.8" r="6" fill="none" stroke="#4a4a4a" stroke-width="1.1"/></svg>
<div style="position:absolute;left:916.5px;top:213px;width:14.5px;height:18px;background:#fdfdfd;border:1px solid #d0d0d0;border-radius:4px"></div>
<div style="position:absolute;left:918px;top:224px;width:1.3px;height:2px;background:#1a0a40"></div>
<div style="position:absolute;left:922px;top:224px;width:1.3px;height:2px;background:#1a0a40"></div>
<div style="position:absolute;left:926px;top:224px;width:1.3px;height:2px;background:#1a0a40"></div>
<div style="position:absolute;left:772.5px;top:517.5px;width:161.0px;height:20.0px;background:#fcf9fc;border:1px solid #ebe6eb;border-radius:4px"></div>
<div class="t" style="left:788.00px;top:521px;font-size:12px;color:#8a8a8a;transform:scaleX(0.8890);transform-origin:0 0;">In Peaksuche übernehmen</div>
<div style="position:absolute;left:772.5px;top:550.5px;width:161.5px;height:20.0px;background:#fcf9fc;border:1px solid #ebe6eb;border-radius:4px"></div>
<div class="t" style="left:786.00px;top:554px;font-size:12px;color:#8a8a8a;transform:scaleX(0.8914);transform-origin:0 0;">In Kalibrierung übernehmen</div>
<div style="position:absolute;left:862.5px;top:582.5px;width:72.0px;height:20.0px;background:#fdfdfd;border:1px solid #d0d0d0;border-radius:4px"></div>
<div class="t" style="left:872.00px;top:586px;font-size:12px;color:#000;transform:scaleX(0.8873);transform-origin:0 0;">Abbrechen</div>
<div style="position:absolute;left:15px;top:590.5px;width:13px;height:12px;border:1px solid #555;border-radius:3px;background:#fbfbfb"></div>
<div class="t" style="left:30.40px;top:588px;font-size:12px;color:#000;transform:scaleX(0.8592);transform-origin:0 0;">Log</div>
<div style="position:absolute;left:63px;top:590.5px;width:13px;height:12px;border:1px solid #555;border-radius:3px;background:#fbfbfb"></div>
<div class="t" style="left:78.50px;top:588px;font-size:12px;color:#000;transform:scaleX(0.8467);transform-origin:0 0;">Resid.</div>
<div class="t" style="left:134.00px;top:588px;font-size:12px;color:#000;transform:scaleX(0.9047);transform-origin:0 0;">Kanal: 465.09</div>
<div class="t" style="left:207.70px;top:588px;font-size:12px;color:#000;transform:scaleX(0.8952);transform-origin:0 0;">Impulse: 781</div>
<div class="t" style="left:276.00px;top:588px;font-size:12px;color:#000;transform:scaleX(0.8974);transform-origin:0 0;">Abweichung vom Spektrum: -1 %</div>
<div style="position:absolute;left:305.5px;top:302.5px;width:355px;height:180px;background:#f3eff3;border:1px solid #b8b8b8"></div>
<div style="position:absolute;left:306.5px;top:303.5px;width:353px;height:24.5px;background:#fff"></div>
<div class="t" style="left:309.60px;top:308px;font-size:12px;color:#000;transform:scaleX(0.9888);transform-origin:0 0;">Nuklid auswählen</div>
<svg style="position:absolute;left:639px;top:309px" width="13" height="13"><path d="M1.2,1.2L11.8,11.8M11.8,1.2L1.2,11.8" stroke="#111" stroke-width="1.1"/></svg>
<div style="position:absolute;left:312px;top:335px;width:258px;height:137px;border:1px solid #828790;background:#f3eff3"></div>
<div style="position:absolute;left:313px;top:336px;width:238px;height:118px;background:#fff"></div>
<div style="position:absolute;left:314px;top:337px;width:237px;height:24px;background:#f2f2f2"></div>
<div style="position:absolute;left:394px;top:337px;width:1px;height:23px;background:#e3e3e3"></div>
<div style="position:absolute;left:475px;top:337px;width:1px;height:23px;background:#e3e3e3"></div>
<div class="t" style="left:339.40px;top:342px;font-size:12px;color:#000;transform:scaleX(0.8637);transform-origin:0 0;">Nuklid</div>
<div class="t" style="left:403.50px;top:342px;font-size:12px;color:#000;transform:scaleX(0.8732);transform-origin:0 0;">Energie [keV]</div>
<div class="t" style="left:486.00px;top:342px;font-size:12px;color:#000;transform:scaleX(0.8997);transform-origin:0 0;">Aktivität [Bq]</div>
<div style="position:absolute;left:318px;top:412px;width:233px;height:17px;background:#0078d7"></div>
<div class="t" style="left:338.90px;top:363px;font-size:12px;color:#000;transform:scaleX(0.8635);transform-origin:0 0;">Cs-137</div>
<div class="t" style="left:420.80px;top:363px;font-size:12px;color:#000;transform:scaleX(0.9325);transform-origin:0 0;">36.45</div>
<div class="t" style="left:497.25px;top:363px;font-size:12px;color:#000;transform:scaleX(0.9403);transform-origin:0 0;">3.5e+05</div>
<div class="t" style="left:338.90px;top:380px;font-size:12px;color:#000;transform:scaleX(0.8635);transform-origin:0 0;">Cs-137</div>
<div class="t" style="left:423.60px;top:380px;font-size:12px;color:#000;transform:scaleX(0.9592);transform-origin:0 0;">4.88</div>
<div class="t" style="left:497.25px;top:380px;font-size:12px;color:#000;transform:scaleX(0.9403);transform-origin:0 0;">3.5e+05</div>
<div class="t" style="left:338.90px;top:397px;font-size:12px;color:#000;transform:scaleX(0.8635);transform-origin:0 0;">Cs-137</div>
<div class="t" style="left:420.80px;top:397px;font-size:12px;color:#000;transform:scaleX(0.9325);transform-origin:0 0;">37.33</div>
<div class="t" style="left:497.25px;top:397px;font-size:12px;color:#000;transform:scaleX(0.9403);transform-origin:0 0;">3.5e+05</div>
<div class="t" style="left:340.60px;top:414px;font-size:12px;color:#fff;transform:scaleX(0.9180);transform-origin:0 0;">Co-60</div>
<div class="t" style="left:415.20px;top:414px;font-size:12px;color:#fff;transform:scaleX(0.9038);transform-origin:0 0;">1332.49</div>
<div class="t" style="left:497.25px;top:414px;font-size:12px;color:#fff;transform:scaleX(0.9403);transform-origin:0 0;">3.6e+05</div>
<div class="t" style="left:340.60px;top:431px;font-size:12px;color:#000;transform:scaleX(0.9180);transform-origin:0 0;">Co-60</div>
<div class="t" style="left:415.20px;top:431px;font-size:12px;color:#000;transform:scaleX(0.9227);transform-origin:0 0;">1173.23</div>
<div class="t" style="left:497.25px;top:431px;font-size:12px;color:#000;transform:scaleX(0.9403);transform-origin:0 0;">3.6e+05</div>
<div style="position:absolute;left:559px;top:419px;width:2px;height:17px;background:#858585"></div>
<div style="position:absolute;left:331px;top:461px;width:198px;height:2px;background:#858585"></div>
<div style="position:absolute;left:577px;top:336px;width:73px;height:20.5px;background:#fdfdfd;border:1.5px solid #0067c0;border-radius:4px"></div>
<div class="t" style="left:605.70px;top:340px;font-size:12px;color:#000;transform:scaleX(0.8017);transform-origin:0 0;">OK</div>
<div style="position:absolute;left:577px;top:368px;width:73px;height:20.5px;background:#fdfdfd;border:1px solid #d0d0d0;border-radius:4px"></div>
<div class="t" style="left:587.00px;top:372px;font-size:12px;color:#000;transform:scaleX(0.8822);transform-origin:0 0;">Abbrechen</div>
</body></html>
